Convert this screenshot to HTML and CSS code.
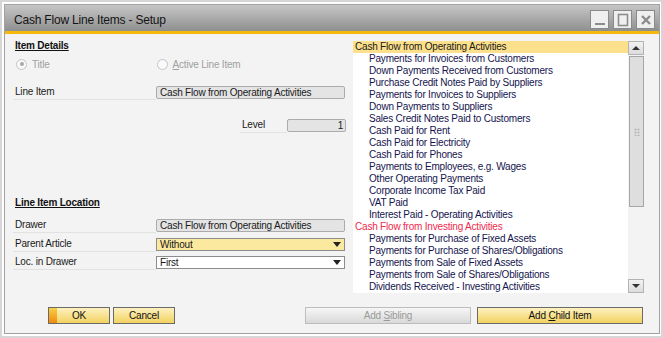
FILE: index.html
```html
<!DOCTYPE html>
<html lang="en">
<head>
    <meta charset="UTF-8">
    <title>Cash Flow Line Items - Setup</title>
    <link rel="stylesheet" href="styles.css">
</head>
<body>

<div class="window">
  <div class="frame">
    <div class="titlebar">
        <span class="title">Cash Flow Line Items - Setup</span>
        <div class="win-btns">
            <span class="win-btn">
                <svg width="16" height="16" viewBox="0 0 16 16"><rect x="3" y="11" width="10" height="2" fill="#8c8c8c"/></svg>
            </span>
            <span class="win-btn">
                <svg width="16" height="16" viewBox="0 0 16 16"><rect x="3.5" y="2.5" width="9" height="11" fill="none" stroke="#8c8c8c" stroke-width="1.6"/></svg>
            </span>
            <span class="win-btn">
                <svg width="16" height="16" viewBox="0 0 16 16"><path d="M4 4 L12 12 M12 4 L4 12" stroke="#8c8c8c" stroke-width="2.4"/></svg>
            </span>
        </div>
    </div>

    <div class="content">
        <div class="left">
            <div class="section-head">Item Details</div>

            <div class="radio-row">
                <span class="radio checked"><span class="dot"></span></span>
                <span class="radio-text">Title</span>
                <span class="radio radio-2"></span>
                <span class="radio-text"><u>A</u>ctive Line Item</span>
            </div>

            <div class="form-row row-line-item">
                <span class="label">Line Item</span>
                <span class="field readonly">Cash Flow from Operating Activities</span>
            </div>

            <div class="form-row row-level">
                <span class="label label-level">Level</span>
                <span class="field readonly level-field">1</span>
            </div>

            <div class="section-head head-location">Line Item Location</div>

            <div class="form-row row-drawer">
                <span class="label">Drawer</span>
                <span class="field readonly">Cash Flow from Operating Activities</span>
            </div>
            <div class="form-row row-parent">
                <span class="label">Parent Article</span>
                <span class="field select focused">Without<i class="arrow"></i></span>
            </div>
            <div class="form-row row-loc">
                <span class="label">Loc. in Drawer</span>
                <span class="field select">First<i class="arrow"></i></span>
            </div>
        </div>

        <div class="list">
            <ul class="items">
                <li class="group selected">Cash Flow from Operating Activities</li>
                <li>Payments for Invoices from Customers</li>
                <li>Down Payments Received from Customers</li>
                <li>Purchase Credit Notes Paid by Suppliers</li>
                <li>Payments for Invoices to Suppliers</li>
                <li>Down Payments to Suppliers</li>
                <li>Sales Credit Notes Paid to Customers</li>
                <li>Cash Paid for Rent</li>
                <li>Cash Paid for Electricity</li>
                <li>Cash Paid for Phones</li>
                <li>Payments to Employees, e.g. Wages</li>
                <li>Other Operating Payments</li>
                <li>Corporate Income Tax Paid</li>
                <li>VAT Paid</li>
                <li>Interest Paid - Operating Activities</li>
                <li class="group red">Cash Flow from Investing Activities</li>
                <li>Payments for Purchase of Fixed Assets</li>
                <li>Payments for Purchase of Shares/Obligations</li>
                <li>Payments from Sale of Fixed Assets</li>
                <li>Payments from Sale of Shares/Obligations</li>
                <li>Dividends Received - Investing Activities</li>
            </ul>
            <div class="scrollbar">
                <span class="sb-btn"><i class="tri-up"></i></span>
                <span class="sb-thumb"><i class="grip"></i></span>
                <span class="sb-space"></span>
                <span class="sb-btn"><i class="tri-down"></i></span>
            </div>
        </div>
    </div>

    <div class="footer">
        <button type="button" class="btn btn-ok">OK</button>
        <button type="button" class="btn">Cancel</button>
        <button type="button" class="btn btn-disabled btn-wide push">Add <u>S</u>ibling</button>
        <button type="button" class="btn btn-wide">Add <u>C</u>hild Item</button>
    </div>
  </div>
</div>

</body>
</html>
```

FILE: styles.css
```css
* { box-sizing: border-box; margin: 0; padding: 0 }
body {
    background: #fff;
    font-family: "Liberation Sans", Arial, sans-serif;
    font-size: 10px;
    letter-spacing: -0.2px;
    color: #1a1a1a;
}

/* window frame */
.window {
    width: 663px;
    height: 338px;
    border: 2px solid #d6d6d6;
    padding: 2px 1px 2px 2px;
    background: #fff;
}
.frame {
    height: 100%;
    border: 1px solid #a2a2a2;
    background: #f3f3f3;
    display: flex;
    flex-direction: column;
}

.titlebar {
    height: 29px;
    display: flex;
    align-items: center;
    padding: 3px 4px 0 9px;
    background: linear-gradient(to bottom, #c6c6c6, #8f8f8f);
    border-bottom: 3px solid #f7b80d;
}
.title {
    font-size: 12px;
    color: #141414;
    flex: 1;
}
.win-btns { display: flex; gap: 4px; }
.win-btn {
    width: 19px;
    height: 19px;
    border: 1px solid #8a8a8a;
    background: #efefef;
    display: flex;
    align-items: center;
    justify-content: center;
}

/* body */
.content {
    height: 262px;
    display: flex;
    gap: 7px;
    padding: 6px 14px 0 8px;
}
.left { width: 333px; }

.section-head {
    height: 12px;
    line-height: 12px;
    font-weight: bold;
    text-decoration: underline;
    padding-left: 2px;
    color: #111;
}
.head-location { margin-top: 64px; }

.radio-row {
    height: 12px;
    margin-top: 6px;
    display: flex;
    align-items: center;
    color: #a0a0a0;
}
.radio {
    width: 11px;
    height: 11px;
    border: 1px solid #c4c4c4;
    border-radius: 50%;
    background: #fafafa;
    margin-left: 3px;
    margin-right: 5px;
    display: flex;
    align-items: center;
    justify-content: center;
}
.radio .dot {
    width: 4px;
    height: 4px;
    border-radius: 50%;
    background: #a8a8a8;
}
.radio-2 { margin-left: 107px; }

.form-row {
    display: flex;
    align-items: flex-start;
    height: 14px;
}
.row-line-item { margin-top: 16px; }
.row-level { margin-top: 19px; justify-content: flex-end; }
.row-drawer { margin-top: 10px; }
.row-parent { margin-top: 5px; }
.row-loc { margin-top: 4px; }

.label {
    width: 143px;
    height: 14px;
    line-height: 12px;
    padding-left: 2px;
    border-bottom: 1px solid #e2e2e2;
}
.label-level { width: 47px; }

.field {
    width: 189px;
    height: 13px;
    line-height: 11px;
    padding-left: 3px;
    border: 1px solid #8c8c8c;
    position: relative;
    white-space: nowrap;
    overflow: hidden;
}
.readonly {
    background: #e4e4e4;
    border-color: #ababab;
    border-radius: 2px;
}
.level-field {
    width: 59px;
    text-align: right;
    padding-right: 2px;
}
.select { background: #fff; }
.focused { background: #fbe99f; }
.arrow {
    position: absolute;
    right: 3px;
    top: 3px;
    border-left: 4px solid transparent;
    border-right: 4px solid transparent;
    border-top: 5px solid #222;
}

/* tree list */
.list {
    width: 291px;
    height: 252px;
    margin-top: 1px;
    display: flex;
}
.items {
    list-style: none;
    width: 275px;
    background: #fff;
    overflow: hidden;
    color: #14144e;
}
.items li {
    height: 12px;
    line-height: 12px;
    padding-left: 16px;
    white-space: nowrap;
}
.items li.group { padding-left: 2px; }
.items li.selected { background: #fde08b; color: #1a1a1a; }
.items li.red { color: #ef2a4d; }

.scrollbar {
    width: 16px;
    display: flex;
    flex-direction: column;
}
.sb-btn {
    height: 14px;
    border: 1px solid #b3b3b3;
    background: linear-gradient(to bottom, #f2f2f2, #dcdcdc);
    display: flex;
    align-items: center;
    justify-content: center;
}
.tri-up {
    border-left: 4px solid transparent;
    border-right: 4px solid transparent;
    border-bottom: 4px solid #333;
}
.tri-down {
    border-left: 4px solid transparent;
    border-right: 4px solid transparent;
    border-top: 4px solid #333;
}
.sb-thumb {
    height: 151px;
    margin: 1px 0 0 1px;
    border: 1px solid #a6a6a6;
    background: #dedede;
    display: flex;
    align-items: center;
    justify-content: center;
}
.grip {
    width: 6px;
    height: 8px;
    background:
        radial-gradient(circle, #b8b8b8 45%, transparent 50%) 0 0 / 3px 3px;
}
.sb-space { flex: 1; }

/* buttons */
.footer {
    display: flex;
    gap: 3px;
    padding: 11px 16px 0 43px;
}
.btn {
    height: 17px;
    width: 62px;
    font-family: inherit;
    font-size: 10px;
    letter-spacing: -0.2px;
    color: #111;
    border: 1px solid #6a6a6a;
    background: linear-gradient(to bottom, #fdf1c0, #f3d260);
}
.btn-ok {
    background:
        linear-gradient(to bottom, #f9cf45, #ee8a12) left / 8px 100% no-repeat,
        linear-gradient(to bottom, #fdf1c0, #f3d260);
}
.btn-wide { width: 166px; margin-left: 3px; }
.push { margin-left: auto; }
.btn-disabled {
    color: #9a9a9a;
    border-color: #bdbdbd;
    background: linear-gradient(to bottom, #f6f6f6, #d9d9d9);
}
```
